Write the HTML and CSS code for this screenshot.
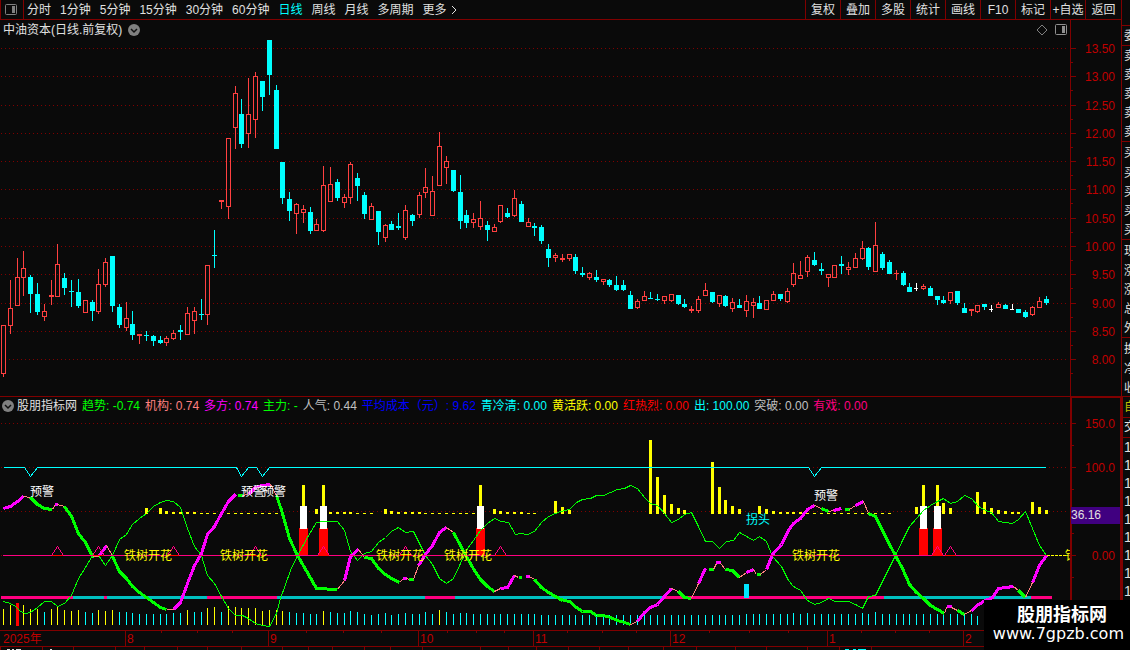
FILE: index.html
```html
<!DOCTYPE html>
<html lang="zh-CN">
<head>
<meta charset="utf-8">
<title>中油资本 日线</title>
<link rel="stylesheet" href="styles.css">
</head>
<body>
<div class="terminal">
  <header class="toolbar">
    <button class="layout-toggle" aria-label="布局">
      <svg class="icon" width="14" height="12" viewBox="0 0 14 12"><rect x="1.5" y="0.5" width="11" height="10" rx="1" fill="none" stroke="#808080"/><rect x="8" y="2" width="3" height="7" fill="#808080"/></svg>
    </button>
    <nav class="periods">
      <button>分时</button><button>1分钟</button><button>5分钟</button><button>15分钟</button><button>30分钟</button><button>60分钟</button><button class="active">日线</button><button>周线</button><button>月线</button><button>多周期</button><button class="more">更多<svg class="icon" width="8" height="12" viewBox="0 0 8 12"><path d="M2 2L6 6L2 10" fill="none" stroke="#e0e0e0"/></svg></button>
    </nav>
    <div class="tools">
      <button>复权</button><button>叠加</button><button>多股</button><button>统计</button><button>画线</button><button>F10</button><button>标记</button><button>+自选</button><button>返回</button>
    </div>
  </header>

  <main>
    <section class="panel">
      <div class="plot">
        <div class="title-row">
          <h1>中油资本(日线.前复权)</h1>
          <button aria-label="展开"><svg class="icon" width="12" height="12" viewBox="0 0 12 12"><circle cx="6" cy="6" r="6" fill="#808080"/><path d="M3 5L6 8L9 5" fill="none" stroke="#101010" stroke-width="1.5"/></svg></button>
          <span class="title-tools">
            <button aria-label="标记点"><svg class="icon" width="12" height="12" viewBox="0 0 12 12"><path d="M6 1L11 6L6 11L1 6Z" fill="none" stroke="#808080"/></svg></button>
            <button aria-label="侧栏"><svg class="icon" width="12" height="12" viewBox="0 0 12 12"><rect x="0.5" y="0.5" width="11" height="10" rx="1" fill="none" stroke="#909090"/><rect x="7" y="2" width="3" height="7" fill="#909090"/></svg></button>
          </span>
        </div>
        <svg id="price" class="price-chart" viewBox="0 40 1070 356" preserveAspectRatio="xMinYMin meet"></svg>
      </div>
      <svg id="price-axis" class="axis price-axis" viewBox="1070 20 51 376"></svg>
    </section>

    <section class="panel indicator">
      <div class="plot">
        <div class="legend">
          <button aria-label="指标菜单"><svg class="icon" width="12" height="12" viewBox="0 0 12 12"><circle cx="6" cy="6" r="6" fill="#808080"/><path d="M3 5L6 8L9 5" fill="none" stroke="#101010" stroke-width="1.5"/></svg></button>
          <span class="name">股朋指标网</span>
          <span class="green">趋势: -0.74</span>
          <span class="salmon">机构: 0.74</span>
          <span class="magenta">多方: 0.74</span>
          <span class="green">主力: -</span>
          <span class="gray">人气: 0.44</span>
          <span class="blue">平均成本（元）: 9.62</span>
          <span class="cyan">青冷清: 0.00</span>
          <span class="yellow">黄活跃: 0.00</span>
          <span class="red">红热烈: 0.00</span>
          <span class="cyan">出: 100.00</span>
          <span class="gray">突破: 0.00</span>
          <span class="pink">有戏: 0.00</span>
        </div>
        <svg id="trend" class="trend-chart" viewBox="0 415 1070 235" preserveAspectRatio="xMinYMin meet"></svg>
      </div>
      <svg id="trend-axis" class="axis trend-axis" viewBox="1070 397 51 253"></svg>
    </section>
  </main>
</div>

<aside class="quotes">
  <ul class="book">
    <li class="head">委</li><li>卖</li><li>卖</li><li>卖</li><li>卖</li><li>卖</li>
    <li class="rule">买</li><li>买</li><li>买</li><li>买</li><li>买</li>
    <li class="rule">现</li><li>涨</li><li>涨</li><li>总</li><li>外</li>
    <li class="rule">换</li><li>净</li><li>收</li>
  </ul>
  <ul class="ticks">
    <li class="own">自</li><li class="trade">交</li>
    <li>1</li><li>1</li><li>1</li><li>1</li><li>1</li><li>1</li><li>1</li><li>1</li><li>1</li>
  </ul>
</aside>

<div class="site-mark">
  <strong>股朋指标网</strong>
  <span>www.7gpzb.com</span>
</div>
<script src="charts.js"></script>
</body>
</html>
```

FILE: styles.css
```css
* { box-sizing: border-box; }

body {
  margin: 0;
  display: flex;
  min-height: 100vh;
  overflow: hidden;
  background: #0a0a0a;
  color: #e0e0e0;
  font: 12px/18px "Liberation Sans", "Noto Sans CJK SC", sans-serif;
}

button {
  padding: 0;
  border: 0;
  background: none;
  color: inherit;
  font: inherit;
  white-space: nowrap;
}

h1 { margin: 0; font-size: 12px; font-weight: normal; }
.icon { display: block; }

.terminal { flex: 1; min-width: 0; }

.toolbar {
  display: flex;
  height: 20px;
  border-bottom: 1px solid #800000;
}

.layout-toggle {
  display: grid;
  place-items: center;
  width: 24px;
  padding-right: 2px;
  border: solid #800000;
  border-width: 0 1px;
}

.periods { display: flex; gap: 9px; padding-left: 3px; }
.periods .active { color: #00ffff; }
.more { display: flex; align-items: center; gap: 3px; }

.tools { display: flex; margin-left: auto; }
.tools button { width: 35px; border-left: 1px solid #800000; }
.tools button:last-child { width: 36px; }

.panel { display: flex; }
.plot { flex: 1; min-width: 0; }
.plot svg { display: block; }
.plot > svg { width: 100%; }

.title-row {
  display: flex;
  align-items: center;
  gap: 6px;
  height: 20px;
  padding: 0 3px;
}
.title-tools { display: flex; gap: 7px; margin-left: auto; }

.price-chart { height: 356px; }
.price-axis { height: 376px; }
.indicator { border-top: 1px solid #800000; }
.trend-chart { height: 235px; }
.trend-axis { height: 253px; }
.axis { display: block; flex: none; width: 51px; }

.legend {
  display: flex;
  align-items: center;
  gap: 5px;
  height: 18px;
  padding-left: 2px;
  white-space: nowrap;
}
.legend .name { margin-left: -2px; }

.green { color: #00ff00; }
.salmon { color: #ff8080; }
.magenta { color: #ff00ff; }
.gray { color: #c0c0c0; }
.blue { color: #0000ff; }
.cyan { color: #00ffff; }
.yellow { color: #ffff00; }
.red { color: #ff0000; }
.pink { color: #ff0080; }

text { font-size: 12px; }

.quotes {
  width: 9px;
  overflow: hidden;
  border-left: 1px solid #800000;
  padding-top: 25px;
}
.quotes ul { margin: 0; padding: 0; list-style: none; }
.quotes li { height: 19px; padding-left: 2px; line-height: 20px; width: 20px; }
.quotes .head { height: 21px; border: solid #800000; border-width: 1px 0; }
.quotes .rule { height: 22px; padding-top: 1px; border-top: 1px solid #800000; }
.book { height: 371px; overflow: hidden; }
.ticks { border-left: 1px solid #800000; }
.quotes .ticks li { height: 18px; line-height: 18px; padding-left: 1px; font-size: 14px; }
.quotes .ticks .own { height: 22px; line-height: 20px; color: #c0c000; border: solid #800000; border-width: 1px 0; font-size: 12px; }
.quotes .ticks .trade { height: 20px; border-bottom: 1px solid #800000; font-size: 12px; }

.site-mark {
  position: absolute;
  right: 0;
  bottom: 0;
  display: flex;
  flex-direction: column;
  align-items: flex-end;
  width: 146px;
  height: 50px;
  padding: 5px 6px;
  background: #000;
  color: #fff;
}
.site-mark strong { padding-right: 17px; font-size: 18px; line-height: 20px; }
.site-mark span { font: 16px/17px "DejaVu Sans", sans-serif; }
```

FILE: charts.js
```js
const NS = 'http://www.w3.org/2000/svg';
const RED = '#ff4040', CYAN = '#00ffff', DARK = '#800000', PINK = '#ff0080', YELLOW = '#ffff00', GREEN = '#00ff00';

function add(parent, tag, attrs, text) {
  const node = document.createElementNS(NS, tag);
  for (const key in attrs) node.setAttribute(key, attrs[key]);
  if (text) node.textContent = text;
  parent.appendChild(node);
  return node;
}
function rect(parent, x, y, width, height, fill) {
  return add(parent, 'rect', { x, y, width, height, fill, 'shape-rendering': 'crispEdges' });
}
function line(parent, points, stroke, width) {
  return add(parent, 'polyline', {
    points, stroke, fill: 'none', 'stroke-width': width || 1,
    transform: 'translate(.5 .5)', 'shape-rendering': 'crispEdges', 'stroke-linejoin': 'round'
  });
}
function label(parent, x, y, text, fill, anchor) {
  return add(parent, 'text', { x, y: y + 4, fill, 'text-anchor': anchor || 'start' }, text);
}
function dots(parent, y) {
  let d = '';
  for (let x = 1; x < 1068; x += 4) d += `M${x} ${y}h1v1h-1z`;
  add(parent, 'path', { d, fill: DARK, 'shape-rendering': 'crispEdges' });
}

/* x, high, open/close top, open/close bottom, low, kind (r up, c down, w flat) */
const candles = `3 325 325 374 377 r;10 280 308 326 334 r;17 258 277 306 306 r;23 251 268 278 296 r;30 275 277 294 313 c;37 283 294 312 315 c;44 304 311 317 321 r;51 280 295 297 305 r;57 244 264 297 297 r;64 273 278 288 295 c;71 280 291 292 307 c;78 279 292 306 308 c;85 300 300 313 313 r;92 300 302 311 321 c;98 269 284 312 314 r;105 258 262 285 287 r;112 256 256 306 312 c;119 304 307 325 328 c;126 302 318 328 331 r;132 311 324 335 340 c;139 334 334 336 344 r;146 331 335 336 341 c;153 335 336 341 346 c;160 336 340 343 344 c;166 336 338 343 346 r;173 330 333 339 340 r;180 325 330 332 340 c;187 307 313 335 335 r;194 307 311 321 334 r;201 299 314 315 320 c;207 265 265 315 325 r;214 230 255 256 268 c;
221 200 200 202 209 r;228 138 138 207 219 r;235 86 93 128 149 r;241 99 114 144 148 c;248 78 114 134 148 r;255 72 76 120 138 r;262 81 81 97 111 c;269 40 40 75 95 c;276 85 90 149 149 c;282 162 162 198 204 c;289 192 199 211 221 c;296 203 204 214 234 r;303 205 209 213 223 r;310 207 212 231 234 c;316 219 224 231 231 r;323 166 185 231 232 r;330 167 184 202 202 r;337 179 182 198 201 c;344 194 197 203 208 r;350 162 164 198 204 r;357 173 178 186 201 c;364 192 195 214 219 c;371 203 206 220 220 r;378 211 211 232 245 c;385 224 225 238 242 r;391 221 224 230 230 c;398 213 226 228 230 c;405 205 210 238 240 r;412 214 215 221 226 c;419 192 195 215 218 r;425 168 187 193 198 r;432 176 191 216 216 r;439 132 146 186 186 r;446 156 161 168 184 r;453 170 170 191 192 c;460 175 192 221 229 c;466 210 215 223 228 c;473 213 219 223 228 r;
480 201 218 227 230 r;487 221 225 230 241 c;494 224 227 232 232 r;500 205 205 222 223 r;507 208 213 217 218 c;514 190 198 216 217 r;521 201 204 222 222 c;528 218 222 227 227 r;534 223 226 228 236 c;541 225 227 241 244 c;548 244 249 258 267 c;555 253 255 258 262 r;562 254 258 260 262 r;569 254 254 259 261 r;575 254 257 271 274 c;582 267 273 275 277 c;589 272 273 278 280 r;596 270 277 280 282 c;603 279 279 282 285 r;609 279 280 285 287 c;616 276 285 290 291 c;623 280 285 290 291 c;630 291 295 309 309 c;637 299 301 308 309 r;644 291 296 301 301 r;650 292 298 299 299 c;657 294 299 300 301 c;664 296 296 301 304 r;671 294 294 301 302 r;678 295 295 304 305 c;684 299 304 307 308 c;691 306 309 311 313 r;698 296 299 311 313 r;705 283 290 296 296 r;712 292 292 302 303 c;719 295 295 304 307 r;725 295 296 306 307 c;732 298 302 309 312 r;739 299 305 308 308 c;746 295 301 311 317 r;753 298 302 306 318 r;
759 296 303 309 309 c;766 300 300 310 310 r;773 291 294 301 301 r;780 294 294 299 301 c;787 288 291 302 303 r;793 263 273 285 287 r;800 261 275 279 279 r;807 255 257 272 277 r;814 252 260 265 266 c;821 263 269 271 275 c;828 274 274 278 287 r;834 265 265 278 278 r;841 256 264 266 274 c;848 262 267 270 275 r;855 253 258 268 268 r;862 241 248 259 260 r;868 247 248 267 270 c;875 222 245 272 272 r;882 252 254 268 270 c;889 260 262 274 274 c;896 270 273 274 280 r;903 271 273 285 286 c;909 283 287 292 292 c;916 283 288 289 291 w;923 284 286 289 290 r;930 286 288 296 296 c;937 296 296 300 305 c;943 296 300 303 304 c;950 292 292 301 304 r;957 291 291 303 305 c;964 303 308 313 313 c;971 309 309 311 316 r;977 305 305 312 313 r;984 304 304 307 310 c;991 305 309 310 312 w;998 302 304 308 308 r;1005 304 305 309 309 c;1012 304 309 310 310 w;1018 309 309 313 313 c;1025 310 312 317 318 c;1032 306 307 315 316 r;1039 297 301 308 308 r;1046 296 299 303 305 c`
  .split(';').map(row => row.trim().split(' ').map(v => isNaN(v) ? v : +v));

/* price chart */
const price = document.getElementById('price');
const priceLevels = [48, 76, 105, 133, 161, 189, 218, 246, 274, 303, 331, 359];
priceLevels.forEach(y => dots(price, y));
for (const [x, high, top, bottom, low, kind] of candles) {
  const color = { r: RED, c: CYAN, w: '#ffffff' }[kind];
  const height = bottom - top;
  if (kind === 'r' && height > 2) {
    if (top > high) rect(price, x, high, 1, top - high, color);
    if (low > bottom) rect(price, x, bottom, 1, low - bottom, color);
    add(price, 'rect', { x: x - 1.5, y: top + 0.5, width: 4, height: height - 1, fill: 'none', stroke: color, 'shape-rendering': 'crispEdges' });
  } else {
    rect(price, x, high, 1, low - high, color);
    rect(price, x - 2, top, kind === 'w' ? 4 : 5, height, color);
  }
}

/* price scale */
const priceAxis = document.getElementById('price-axis');
rect(priceAxis, 1070, 20, 1, 376, DARK);
priceLevels.forEach((y, i) => {
  rect(priceAxis, 1071, y, 5, 1, DARK);
  rect(priceAxis, 1071, y + 14, 2, 1, DARK);
  label(priceAxis, 1115, y + 1, (13.5 - i * 0.5).toFixed(2), '#c00000', 'end');
});

/* indicator chart */
const trend = document.getElementById('trend');
[423, 467, 511, 555].forEach(y => dots(trend, y));

[[1, 73, 0], [73, 104, 1], [104, 107, 0], [107, 207, 1], [207, 277, 0], [277, 425, 1], [425, 455, 0], [455, 664, 1], [664, 884, 0], [884, 1031, 1], [1031, 1052, 0]]
  .forEach(([from, to, calm]) => rect(trend, from, 596, to - from, 3, calm ? '#00c0c0' : PINK));

const volume = { 3: 609, 10: 605, 23: 605, 30: 609, 37: 609, 51: 609, 57: 606, 64: 610, 71: 611, 78: 610, 98: 610, 105: 611, 112: 610, 187: 610, 207: 608, 214: 607, 228: 606, 235: 607, 241: 608, 248: 608, 255: 608, 262: 611, 269: 610, 276: 610, 282: 611, 323: 611, 439: 610 };
const calmVolume = { 44: 612, 85: 612, 92: 613, 119: 612, 126: 612, 132: 613, 173: 613, 180: 613, 194: 612, 201: 612, 221: 612, 289: 612, 296: 613, 303: 613, 330: 612, 337: 613, 344: 613, 350: 611, 357: 612, 371: 615, 385: 613, 391: 615, 405: 613, 425: 612, 446: 612, 460: 613, 466: 613, 793: 613, 807: 613, 862: 613, 875: 612, 977: 616 };
for (const [x] of candles) {
  if (x === 17 || x > 980) continue;
  const top = volume[x] || calmVolume[x] || (x > 540 && x < 740 ? 615 : 614);
  rect(trend, x, top, 1, 625 - top, volume[x] ? YELLOW : CYAN);
}
rect(trend, 16, 603, 3, 23, '#ff0000');

[303, 323, 480, 923, 937].forEach(x => {
  rect(trend, x - 4, 528, 9, 27, '#ff0000');
  rect(trend, x - 3, 506, 7, 23, '#ffffff');
});

const active = { 146: 508, 160: 508, 166: 511, 173: 512, 180: 512, 187: 512, 194: 512, 316: 509, 330: 512, 337: 512, 344: 512, 350: 512, 385: 509, 391: 511, 398: 512, 405: 512, 412: 512, 419: 512, 494: 509, 500: 511, 507: 512, 514: 512, 521: 512, 555: 501, 562: 507, 569: 510, 650: 440, 657: 477, 664: 495, 671: 504, 678: 508, 684: 510, 712: 462, 719: 487, 725: 500, 732: 506, 739: 509, 759: 506, 766: 509, 773: 511, 780: 512, 787: 512, 793: 512, 800: 512, 916: 507, 943: 503, 950: 508, 977: 492, 984: 502, 991: 508, 998: 510, 1005: 511, 1012: 512, 1018: 512, 1032: 502, 1039: 507, 1046: 510 };
for (const [x] of candles) {
  if (active[x]) rect(trend, x - 1, active[x], 3, 514 - active[x], YELLOW);
  else if ((x > 200 && x < 285) || (x > 355 && x < 373) || (x > 424 && x < 478) || (x > 527 && x < 536) || (x > 806 && x < 892)) rect(trend, x - 1, 513, 3, 1, YELLOW);
}
[303, 323, 480, 923, 937].forEach(x => rect(trend, x - 1, 485, 3, 21, YELLOW));

/* curve samples are stored at three units per pixel */
function curve(offsetX, offsetY, samples) {
  return samples.split(' ').map(p => {
    const [x, y] = p.split(',');
    return Math.round(offsetX + (x - 1) / 3) + ',' + Math.round(offsetY + (y - 1) / 3);
  }).join(' ');
}
line(trend, [
  curve(0, 435, '10,499 31,505 45,515 60,530 75,535 91,532 112,517 133,499 154,499 172,513 193,505 214,482 235,430 256,396 277,361 295,361 316,390 337,361 358,313 379,297 397,267 418,250 439,235 460,215 481,202 499,196 520,200 541,217 562,280 583,335 604,361 622,420 643,445 664,485 685,520 706,540 727,540 745,550 766,565 787,571 808,574 829,535'),
  curve(280, 435, '0,490 30,405 51,361 85,300 109,262 130,259 172,259 193,285 211,350 232,375 253,355 274,349 295,322 316,307 334,290 355,278 376,291 400,289 436,361 457,388 478,430 499,444 520,430 541,385 562,340 580,315 601,285 622,265 643,250 664,259 684,262 705,298 720,295 741,298 764,289 785,262 806,245 827,235'),
  curve(560, 435, '0,229 28,223 49,203 67,194 90,190 109,181 130,181 151,172 172,163 193,160 211,151 232,160 253,187 271,205 292,212 313,235 334,262 355,253 373,238 393,232 415,275 437,320 457,320 478,340 499,319 520,315 538,292 559,305 580,317 598,304 620,320 638,365 664,393 685,435 700,453 722,467 742,497 764,509 785,502 806,490 827,498'),
  curve(840, 395, '0,618 25,618 46,627 67,639 85,605 106,600 127,560 166,481 187,435 208,395 229,370 250,345 271,330 292,320 310,310 332,325 352,318 373,301 394,311 415,335 435,347 455,351 475,379 496,383 517,386 536,374 557,350 577,400 598,450 619,481')
].join(' '), GREEN);

function segments(offsetX, offsetY, rows) {
  const style = { M: ['#ff00ff', 3], G: [GREEN, 3], P: ['#ff8080', 1] };
  rows.split(';').forEach(row => line(trend, curve(offsetX, offsetY, row.slice(1)), ...style[row[0]]));
}
segments(0, 435, 'M10,221 31,215 52,200 70,184;P70,184 91,188;G91,188 112,208 133,220 157,223;P157,223 165,209;M163,209 173,209;P173,209 193,213;G193,213 214,243 235,295 256,322 277,364 281,365;P277,365 295,365 300,355;M298,362 318,331;P318,331 337,361;G337,365 358,408 379,430 397,455 418,472 439,487 460,502 481,518 499,523;P499,523 520,523;M520,523 541,502 562,445 583,390 604,355 622,297 643,275 664,235 685,200 706,178;G711,181 727,181;P727,181 745,178;M745,178 766,157 787,150 811,148;P811,148 829,180;G829,180 843,225');
segments(280, 435, 'G0,215 28,310 51,361 72,397 109,461 172,463;P172,463 193,437;M193,437 211,365 234,344;P234,344 253,367;G253,367 274,370 295,400 316,417 334,430 357,443;P357,443 370,430;M366,430 378,430;P378,430 388,433;G386,433 400,433;P400,433 415,392;M415,392 436,358 457,330 478,293 499,277;P499,277 520,291;G520,291 541,330 562,370 583,407 601,432 622,455 643,469;P643,469 661,460;M661,460 682,457 703,422;P703,422 715,427;G715,427 725,427;M736,424 747,424;P747,424 762,432;G762,432 785,457 806,472 827,484 848,497');
segments(560, 435, 'G0,493 28,500 49,516 67,529 90,529 109,541 130,541 151,547 172,556 193,562 211,568;P211,568 232,558;M232,558 253,533 271,517 292,508 313,485 334,461;P334,461 354,470;G354,470 373,487 395,490;P395,490 415,445;M415,445 437,400;G445,403 460,403;P460,403 470,385;M467,382 482,382;P482,385 497,403;G497,403 517,407 538,428;P538,428 559,412;M559,412 580,404;P580,404 590,418;G588,418 601,418;P601,418 620,404;M620,404 638,358 664,328 685,286 700,266 722,251 742,224 764,211;P764,211 785,219;G785,219 806,230;P806,230 820,225;M820,225 845,219;G853,223 869,223');
segments(840, 395, 'G13,343 28,343;P28,343 46,331;M46,331 69,319;P69,319 85,354;G85,354 106,363 127,405 148,447 166,481 187,520 208,568 229,592 250,609 271,630 292,642 312,654;P312,654 320,637;M320,634 334,634;P334,636 352,645;G352,645 374,658;P374,658 394,646;M394,646 415,627 435,615 456,607 475,580 496,576 519,574;P519,574 536,587;G536,587 557,607;P557,607 577,562;M577,562 598,512 619,481');

rect(trend, 3, 555, 1044, 1, PINK);
[57, 98, 173, 255, 323, 405, 500, 937, 950].forEach(x => {
  line(trend, `${x - 6},555 ${x},546 ${x + 6},555`, PINK);
  rect(trend, x - 5, 555, 11, 1, '#ff0000');
});
line(trend, '3,467 24,467 30,476 37,467 236,467 241,476 248,467 256,467 262,476 269,467 808,467 814,476 821,467 1045,467', CYAN);
rect(trend, 744, 584, 5, 14, '#00e5ff');
for (let x = 1047; x < 1066; x += 4) rect(trend, x, 555, 3, 1, YELLOW);

label(trend, 30, 492, '预警', '#ffffff');
label(trend, 241, 492, '预警', '#ffffff');
label(trend, 262, 492, '预警', '#ffffff');
label(trend, 814, 496, '预警', '#ffffff');
label(trend, 746, 520, '拐头', CYAN);
[124, 220, 376, 444, 792, 1065].forEach(x => label(trend, x, 556, '铁树开花', YELLOW));

/* dates */
rect(trend, 0, 630, 1070, 1, DARK);
rect(trend, 0, 646, 1070, 1, DARK);
[[1, '2025年'], [125, '8'], [268, '9'], [418, '10'], [533, '11'], [670, '12'], [827, '1'], [963, '2']].forEach(([x, text]) => {
  if (x > 1) rect(trend, x, 631, 1, 15, DARK);
  label(trend, x + 2, 639, text, '#c00000');
});
[161, 197, 232, 306, 343, 381, 447, 476, 504, 567, 602, 636, 709, 749, 788, 861, 895, 929].forEach(x => rect(trend, x, 631, 1, 2, DARK));
[0, 42, 73, 115, 144, 177, 207, 241, 282, 308, 332, 364, 390, 422, 480, 508, 536, 568, 599, 628, 663, 696, 735, 766, 807, 839, 871].forEach(x => rect(trend, x, 647, 1, 3, DARK));
[[7, 3], [12, 2], [16, 5], [50, 2]].forEach(([x, w]) => rect(trend, x, 649, w, 1, '#e0e0e0'));
[[845, 4], [853, 3], [858, 8]].forEach(([x, w]) => rect(trend, x, 649, w, 1, CYAN));

/* indicator scale */
const trendAxis = document.getElementById('trend-axis');
rect(trendAxis, 1070, 397, 2, 253, DARK);
rect(trendAxis, 1070, 397, 51, 1, DARK);
rect(trendAxis, 1120, 397, 1, 253, DARK);
[423, 467, 511, 555].forEach(y => {
  rect(trendAxis, 1072, y, 4, 1, DARK);
  rect(trendAxis, 1072, y + 22, 2, 1, DARK);
});
label(trendAxis, 1115, 424, '150.0', '#c00000', 'end');
label(trendAxis, 1115, 468, '100.0', '#c00000', 'end');
label(trendAxis, 1115, 556, '0.00', '#c00000', 'end');
rect(trendAxis, 1071, 507, 49, 17, '#400080');
label(trendAxis, 1071, 515, '36.16', '#e0e0e0');
```
